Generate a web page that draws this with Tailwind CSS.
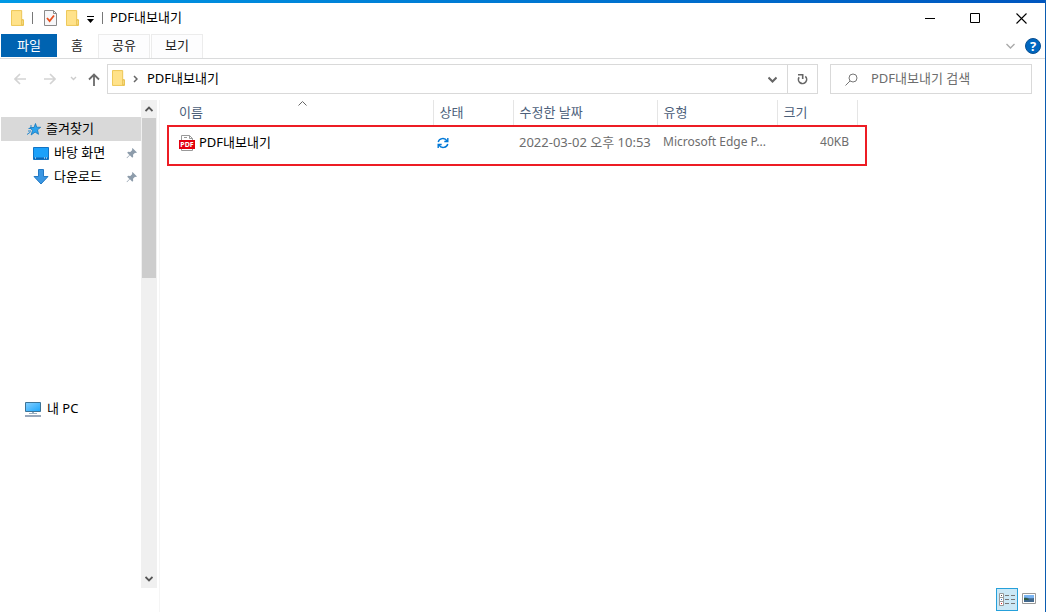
<!DOCTYPE html>
<html lang="ko">
<head>
    <meta charset="utf-8">
    <meta name="viewport" content="width=device-width, initial-scale=1">
    <title>PDF내보내기</title>
    <script src="https://cdn.jsdelivr.net/npm/@tailwindcss/browser@4"></script>
</head>
<body class="bg-white text-black text-[13px] leading-4 font-['Noto_Sans','Noto_Sans_CJK_KR',sans-serif]">

<!-- shared icons -->
<svg class="hidden">
    <symbol id="folder" viewBox="0 0 14 17">
        <path d="M.5.5h11v10h2v6H.5z" fill="#ffe28a" stroke="#ecc44e"/>
        <path d="M11.500 16V10.500h1.500V16z" fill="#fff3c0" stroke="#e6bd45"/>
    </symbol>
    <symbol id="pin" viewBox="0 0 12 12">
        <path d="M6.5 1 11 5.5l-1.2.5-.8-.2-2 2 .2 2-.9.9-2.400-2.400L1 11.200l-.4-.4L3.400 8 1.200 5.700l.9-.9 2.200.2 2-2L6 2z" fill="#8d9cab"/>
    </symbol>
</svg>

<div class="flex flex-col h-screen border-r border-[#0b5cb0] overflow-hidden">
    <div class="h-[3px] shrink-0 bg-linear-to-r from-[#0099e5] to-[#0056bf]"></div>

    <!-- title bar -->
    <header class="flex items-start justify-between h-[31px] shrink-0">
        <div class="flex items-center h-[30px] pl-[11px]">
            <svg class="w-[13px] h-4"><use href="#folder"/></svg>
            <span class="w-px h-3 ml-2 bg-[#777]"></span>
            <button class="ml-[11px]" aria-label="속성">
                <svg class="w-[13px] h-4" viewBox="0 0 13 16" fill="none">
                    <path d="M.5.5h9l3 3v12H.5z" fill="#f7f7f9" stroke="#8a8a8a"/>
                    <path d="M9.5.5v3h3" stroke="#8a8a8a"/>
                    <path d="m3 8 2.6 3L10 5.5" stroke="#e8501e" stroke-width="1.8"/>
                </svg>
            </button>
            <button class="ml-[9px]" aria-label="새 폴더"><svg class="w-[13px] h-4"><use href="#folder"/></svg></button>
            <button class="ml-2" aria-label="빠른 실행 도구 모음 사용자 지정">
                <svg class="w-[7px] h-4" viewBox="0 0 7 16"><path d="M0 6h7v1H0zM0 9h7L3.5 13z"/></svg>
            </button>
            <span class="w-px h-3 ml-2 bg-[#777]"></span>
            <h1 class="ml-[7px] pb-[2px]">PDF내보내기</h1>
        </div>
        <div class="flex pr-px">
            <button class="flex justify-center w-[43px] h-[31px] items-center" aria-label="최소화">
                <svg class="w-[11px] h-[11px]" viewBox="0 0 11 11"><path d="M0 5h10v1H0z"/></svg>
            </button>
            <button class="flex justify-center w-[46px] h-[31px] items-center" aria-label="최대화">
                <svg class="w-[11px] h-[11px]" viewBox="0 0 11 11" fill="none" stroke="#000"><path d="M.5.5h9v9h-9z"/></svg>
            </button>
            <button class="flex justify-center w-[46px] h-[31px] items-center" aria-label="닫기">
                <svg class="w-[11px] h-[11px]" viewBox="0 0 11 11" fill="none" stroke="#000" stroke-width="1.1"><path d="m.5.5 10 10M10.500.5l-10 10"/></svg>
            </button>
        </div>
    </header>

    <!-- ribbon tabs -->
    <nav class="flex items-center justify-between h-[25px] shrink-0 pl-px border-b border-[#dadbdc] text-[#222]">
        <div class="flex h-6 items-start">
            <button class="w-14 h-[23px] pb-[2px] bg-[#0063b1] text-white">파일</button>
            <button class="w-10 h-[23px] pb-[2px]">홈</button>
            <button class="w-[52px] h-6 ml-px pb-[3px] border border-b-0 border-[#ececec] bg-[#fdfdfe]">공유</button>
            <button class="w-[52px] h-6 ml-px pb-[3px] border border-b-0 border-[#ececec] bg-[#fdfdfe]">보기</button>
        </div>
        <div class="flex items-center gap-[10px] pr-1">
            <button aria-label="리본 확장">
                <svg class="w-[9px] h-4" viewBox="0 0 9 16" fill="none" stroke="#aaa" stroke-width="1.4"><path d="m.5 6 4 4 4-4"/></svg>
            </button>
            <button class="w-4 h-4 rounded-full bg-[#0067c0] border border-[#0a4f91] text-white text-[13px] leading-[14px] font-bold" aria-label="도움말">?</button>
        </div>
    </nav>

    <!-- address bar -->
    <div class="flex items-center shrink-0 pt-[5px] pb-[6px] pr-[13px]">
        <div class="flex items-center pl-[14px]">
            <button aria-label="뒤로">
                <svg class="w-3 h-3" viewBox="0 0 12 12" fill="none" stroke="#d3d3d3" stroke-width="1.6"><path d="M12 6H1M6 1 1 6l5 5"/></svg>
            </button>
            <button class="ml-[18px]" aria-label="앞으로">
                <svg class="w-3 h-3" viewBox="0 0 12 12" fill="none" stroke="#d3d3d3" stroke-width="1.6"><path d="M0 6h11M6 1l5 5-5 5"/></svg>
            </button>
            <button class="ml-[14px]" aria-label="최근 위치">
                <svg class="w-[7px] h-3" viewBox="0 0 7 12" fill="none" stroke="#ccc" stroke-width="1.4"><path d="m1 4 2.5 2.5L6 4"/></svg>
            </button>
            <button class="ml-[11px]" aria-label="위로">
                <svg class="w-3 h-[13px]" viewBox="0 0 12 13" fill="none" stroke="#6b6b6b" stroke-width="1.8"><path d="M6 13V1.500M1 6.500l5-5 5 5"/></svg>
            </button>
        </div>
        <div class="flex flex-1 items-center h-[30px] ml-[7px] border border-[#d9d9d9]">
            <svg class="w-[13px] h-4 ml-1 mb-[2px]"><use href="#folder"/></svg>
            <svg class="w-[5px] h-2 ml-2" viewBox="0 0 5 8" fill="none" stroke="#666" stroke-width="1.5"><path d="m1 1 3 3-3 3"/></svg>
            <span class="ml-[9px] pb-[3px]">PDF내보내기</span>
            <button class="ml-auto mr-[10px]" aria-label="이전 위치">
                <svg class="w-[9px] h-4" viewBox="0 0 9 16" fill="none" stroke="#666" stroke-width="2"><path d="m.5 6.500 4 4 4-4"/></svg>
            </button>
            <button class="flex items-center justify-center w-[30px] h-[28px] border-l border-[#d9d9d9]" aria-label="새로 고침">
                <svg class="w-[11px] h-3" viewBox="0 0 11 12" fill="none" stroke="#666" stroke-width="1.6"><path d="M8.300 3.400a4.100 4.100 0 1 1-6.200.8M1 1.800h4.700v4.200"/></svg>
            </button>
        </div>
        <label class="flex items-center w-[202px] h-[30px] ml-3 border border-[#d9d9d9]">
            <svg class="w-[13px] h-[13px] ml-[14px] shrink-0" viewBox="0 0 13 13" fill="none" stroke="#777"><circle cx="8" cy="5" r="4"/><path d="M5 8 .5 12.500"/></svg>
            <input class="w-full ml-[13px] pb-[3px] outline-none placeholder:text-[#6d6d6d]" type="text" aria-label="검색" placeholder="PDF내보내기 검색">
        </label>
    </div>

    <main class="flex flex-1 min-h-0">
        <!-- navigation pane -->
        <aside class="flex w-[160px] shrink-0 pl-px border-r border-[#f5f5f5]">
            <div class="flex-1 pt-[17px]">
                <a href="#" class="flex items-center h-6 pl-[26px] bg-[#d9d9d9]">
                    <svg class="w-[14px] h-[13px] mr-[5px]" viewBox="0 0 14 13">
                        <path d="m8.500.5 1.200 3.700 4 .1-3.200 2.500 1 4.500-3.400-2.200-4 2.900 1.400-4.400L3 4.500h4z" fill="#2ba3ee" stroke="#1377bd" stroke-width=".8"/>
                        <path d="M3 3h2M1.500 5.500h3M1 8h3M0 11.500 3.500 9" stroke="#2587cc"/>
                    </svg>
                    <span class="pb-[2px]">즐겨찾기</span>
                </a>
                <a href="#" class="flex items-center h-6 pl-8 pr-[3px]">
                    <svg class="w-4 h-[13px] mr-[5px]" viewBox="0 0 16 13">
                        <path d="M.5.5h15v12H.5z" fill="#1ba1fa" stroke="#1173c4"/>
                        <path d="M1 10.500h14v1.500H1z" fill="#0b65b4"/>
                        <path d="M2 11h1M11 11h1M13 11h1" stroke="#fff"/>
                    </svg>
                    <span class="pb-[2px]">바탕 화면</span>
                    <svg class="w-3 h-3 ml-auto"><use href="#pin"/></svg>
                </a>
                <a href="#" class="flex items-center h-6 pl-8 pr-[3px]">
                    <svg class="w-4 h-4 mr-[5px]" viewBox="0 0 16 16"><path d="M5.500.5h5v7h4.500l-7 7.500-7-7.500h4.500z" fill="#3b97e3" stroke="#2379c4"/></svg>
                    <span class="pb-[2px]">다운로드</span>
                    <svg class="w-3 h-3 ml-auto"><use href="#pin"/></svg>
                </a>
                <a href="#" class="flex items-center h-6 mt-52 pl-6">
                    <svg class="w-4 h-[15px] mr-[6px]" viewBox="0 0 16 15">
                        <defs><linearGradient id="screen" x2="1" y2="1"><stop stop-color="#86d0ff"/><stop offset="1" stop-color="#1ca5fb"/></linearGradient></defs>
                        <path d="M.5.5h15v9H.5z" fill="url(#screen)" stroke="#3c7396"/>
                        <path d="M7 10h2v1H7zM4 11h8v1H4z" fill="#9bb0c2"/>
                        <path d="M0 13h16v2H0z" fill="#9aa8bb"/>
                    </svg>
                    <span class="pb-[2px]">내 PC</span>
                </a>
            </div>
            <div class="flex flex-col items-center w-4 mr-[2px] mb-6 bg-[#f0f0f0]">
                <button class="flex items-center justify-center h-[18px]" aria-label="위로 스크롤">
                    <svg class="w-2 h-[6px]" viewBox="0 0 8 6" fill="none" stroke="#555" stroke-width="1.8"><path d="m.5 5 3.500-3.500L7.500 5"/></svg>
                </button>
                <div class="w-[14px] h-40 bg-[#cdcdcd]"></div>
                <button class="flex items-center justify-center h-[18px] mt-auto" aria-label="아래로 스크롤">
                    <svg class="w-2 h-[6px]" viewBox="0 0 8 6" fill="none" stroke="#555" stroke-width="1.8"><path d="m.5 1 3.500 3.500L7.500 1"/></svg>
                </button>
            </div>
        </aside>

        <!-- file list -->
        <section class="flex flex-col flex-1 justify-between">
            <div class="relative self-start pr-[9px]">
                <table class="table-fixed w-[697px] text-left">
                    <colgroup>
                        <col class="w-[273px]">
                        <col class="w-20">
                        <col class="w-36">
                        <col class="w-[120px]">
                        <col class="w-20">
                    </colgroup>
                    <thead class="text-[#4c607a]">
                        <tr class="h-[26px]">
                            <th class="relative pl-[19px] pb-[2px] font-normal border-r border-[#e5e5e5]">
                                이름
                                <svg class="absolute top-px left-[138px] w-[9px] h-[5px]" viewBox="0 0 9 5" fill="none" stroke="#666"><path d="m.5 4.500 4-4 4 4"/></svg>
                            </th>
                            <th class="pl-[6px] pb-[2px] font-normal border-r border-[#e5e5e5]">상태</th>
                            <th class="pl-[6px] pb-[2px] font-normal border-r border-[#e5e5e5]">수정한 날짜</th>
                            <th class="pl-[6px] pb-[2px] font-normal border-r border-[#e5e5e5]">유형</th>
                            <th class="pl-[6px] pb-[2px] font-normal border-r border-[#e5e5e5]">크기</th>
                        </tr>
                    </thead>
                    <tbody class="text-[#6d6d6d]">
                        <tr class="h-[34px]">
                            <td class="pl-[19px]">
                                <a href="#" class="flex items-center gap-1 text-black">
                                    <svg class="w-4 h-4" viewBox="0 0 16 16">
                                        <path d="M2.500 15.500V.5h8l3 3v12z" fill="#fff" stroke="#999"/>
                                        <path d="M10.500.5v3h3M5 2.500h3" fill="none" stroke="#999"/>
                                        <path d="M0 5h16v9H0z" fill="#e3000f"/>
                                        <text x="8" y="12" text-anchor="middle" class="fill-white text-[7px] font-bold">PDF</text>
                                    </svg>
                                    <span class="pb-[2px]">PDF내보내기</span>
                                </a>
                            </td>
                            <td class="pl-1">
                                <svg class="w-3 h-3" viewBox="0 0 12 12" fill="none" stroke="#0078d7" stroke-width="1.4">
                                    <path d="M1.200 5C2 1.500 7.500 0 10 3.800M10.800 1v3.500H7.300M10.800 7C10 10.500 4.500 12 2 8.200M1.200 11V7.500h3.500"/>
                                </svg>
                            </td>
                            <td class="pl-[6px] pb-[2px] whitespace-nowrap">2022-03-02 오후 10:53</td>
                            <td class="pl-[6px] pb-[2px] text-xs whitespace-nowrap">Microsoft Edge P...</td>
                            <td class="pr-2 pb-[2px] text-xs text-right">40KB</td>
                        </tr>
                    </tbody>
                </table>
                <!-- highlight box around the exported file -->
                <div class="absolute left-[7px] right-0 top-[25px] h-[41px] border-2 border-[#ed1c24] pointer-events-none"></div>
            </div>

            <div class="flex items-start justify-end h-6 gap-1 pr-[9px]">
                <button class="flex items-center justify-center w-[22px] h-[23px] border border-[#26a0da] bg-[#cbe8f6]" aria-label="자세히">
                    <svg class="w-4 h-[13px]" viewBox="0 0 16 13" fill="none">
                        <path d="M.5.5h4v4h-4zM.5 4.500h4v4h-4zM.5 8.500h4v4h-4z" fill="#fff" stroke="#999"/>
                        <path d="M2 2.500h1" stroke="#555"/><path d="M2 6.500h1" stroke="#37c"/><path d="M2 10.500h1" stroke="#d22"/>
                        <path d="M6 2.500h4M12 2.500h4M6 6.500h4M12 6.500h4M6 10.500h4M12 10.500h4" stroke="#777"/>
                    </svg>
                </button>
                <button class="pt-[5px]" aria-label="큰 아이콘">
                    <svg class="w-[14px] h-[11px]" viewBox="0 0 14 11">
                        <path d="M.5.5h13v10H.5z" fill="#fff" stroke="#999"/>
                        <path d="M2 2h10v4H2z" fill="#79b4f2"/><path d="M2 5c3-1 5 1 10 0v4H2z" fill="#41688c"/><path d="M2 5c2-.5 4 .5 5 2H2z" fill="#2f5b45"/>
                    </svg>
                </button>
            </div>
        </section>
    </main>
</div>

</body>
</html>
